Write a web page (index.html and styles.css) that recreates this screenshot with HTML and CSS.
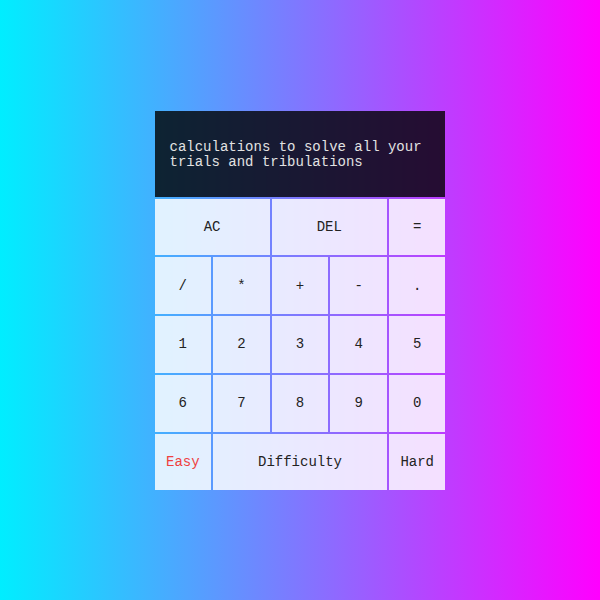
FILE: index.html
```html
<!DOCTYPE html>
<html lang="en">
<head>
<meta charset="utf-8">
<title>Calculator</title>
<link rel="stylesheet" href="styles.css">
</head>
<body>
<div class="calculator">
  <div class="display">calculations to solve all your trials and tribulations</div>
  <button class="key span-2">AC</button>
  <button class="key span-2">DEL</button>
  <button class="key">=</button>
  <button class="key">/</button>
  <button class="key">*</button>
  <button class="key">+</button>
  <button class="key">-</button>
  <button class="key">.</button>
  <button class="key">1</button>
  <button class="key">2</button>
  <button class="key">3</button>
  <button class="key">4</button>
  <button class="key">5</button>
  <button class="key">6</button>
  <button class="key">7</button>
  <button class="key">8</button>
  <button class="key">9</button>
  <button class="key">0</button>
  <button class="key easy">Easy</button>
  <button class="key span-3">Difficulty</button>
  <button class="key">Hard</button>
</div>
</body>
</html>
```
FILE: styles.css
```css
* {
  box-sizing: border-box;
}

body {
  margin: 0;
  min-height: 100vh;
  display: flex;
  align-items: center;
  justify-content: center;
  background: linear-gradient(to right, #00eeff, #ff00ff);
  font-family: "Liberation Mono", "Courier New", monospace;
}

.calculator {
  width: 291px;
  height: 380px;
  margin-top: 1px;
  display: grid;
  grid-template-columns: repeat(5, 1fr);
  grid-template-rows: 86px repeat(5, 1fr);
  gap: 2px;
}

.display {
  grid-column: 1 / -1;
  background: rgba(0, 0, 0, 0.8);
  color: #e2e2e2;
  font-size: 14px;
  line-height: 15px;
  padding: 2px 15px 0;
  display: flex;
  align-items: center;
}

.key {
  border: none;
  margin: 0;
  padding: 0;
  background: rgba(255, 255, 255, 0.84);
  font-family: "Liberation Mono", "Courier New", monospace;
  font-size: 14px;
  color: #222;
  cursor: pointer;
}

.span-2 {
  grid-column: span 2;
}

.span-3 {
  grid-column: span 3;
}

.easy {
  color: #ef4040;
}
```
